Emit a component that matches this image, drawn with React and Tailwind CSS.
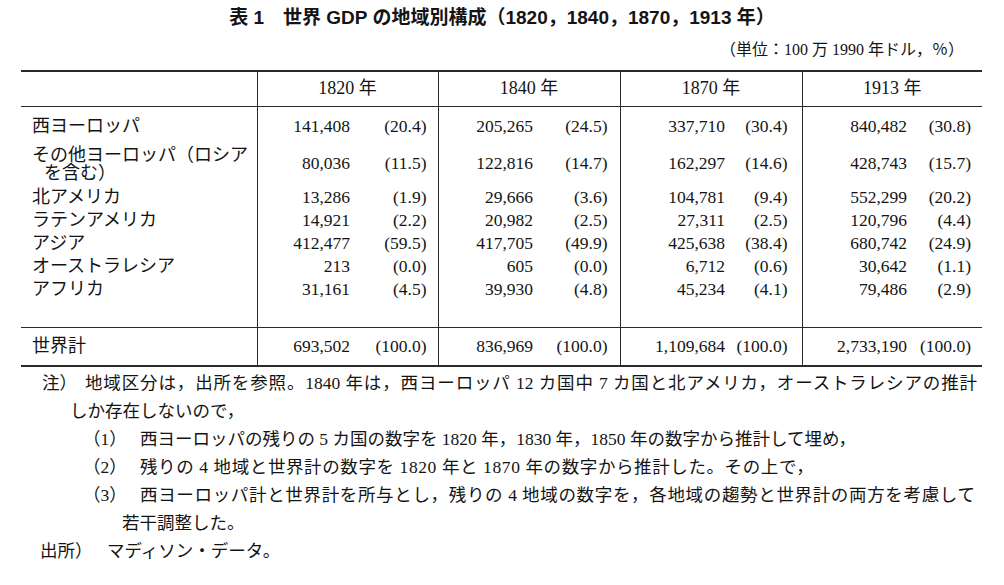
import { Fragment } from "react";

const rows = [
  { name: ["西ヨーロッパ"], v: [["141,408", "(20.4)"], ["205,265", "(24.5)"], ["337,710", "(30.4)"], ["840,482", "(30.8)"]] },
  { name: ["その他ヨーロッパ（ロシア", "を含む）"], v: [["80,036", "(11.5)"], ["122,816", "(14.7)"], ["162,297", "(14.6)"], ["428,743", "(15.7)"]] },
  { name: ["北アメリカ"], v: [["13,286", "(1.9)"], ["29,666", "(3.6)"], ["104,781", "(9.4)"], ["552,299", "(20.2)"]] },
  { name: ["ラテンアメリカ"], v: [["14,921", "(2.2)"], ["20,982", "(2.5)"], ["27,311", "(2.5)"], ["120,796", "(4.4)"]] },
  { name: ["アジア"], v: [["412,477", "(59.5)"], ["417,705", "(49.9)"], ["425,638", "(38.4)"], ["680,742", "(24.9)"]] },
  { name: ["オーストラレシア"], v: [["213", "(0.0)"], ["605", "(0.0)"], ["6,712", "(0.6)"], ["30,642", "(1.1)"]] },
  { name: ["アフリカ"], v: [["31,161", "(4.5)"], ["39,930", "(4.8)"], ["45,234", "(4.1)"], ["79,486", "(2.9)"]] },
];

const total = [["693,502", "(100.0)"], ["836,969", "(100.0)"], ["1,109,684", "(100.0)"], ["2,733,190", "(100.0)"]];

const years = ["1820 年", "1840 年", "1870 年", "1913 年"];

// right padding of the percentage cell, per year column
const pctPad = ["pr-[11px]", "pr-[12px]", "pr-[14px]", "pr-[11px]"];

function Cells({ vals, extra = "" }) {
  return vals.map(([n, p], i) => (
    <Fragment key={i}>
      <td className={`border-l border-[#2a2a2a] text-right align-middle ${extra}`}>{n}</td>
      <td className={`text-right align-middle ${pctPad[i]} ${extra}`}>{p}</td>
    </Fragment>
  ));
}

export default function App() {
  return (
    <div className="w-[1004px] h-[585px] bg-white text-[#141414] overflow-hidden font-['Liberation_Serif','Noto_Sans_CJK_JP',serif]">
      {/* Title */}
      <div className="h-[36px] leading-[36px] text-center text-[19px] font-bold font-['Liberation_Sans','Noto_Sans_CJK_JP',sans-serif]">
        表 1　世界 GDP の地域別構成（1820，1840，1870，1913 年）
      </div>
      <div className="h-[34px] leading-[28px] text-right pr-[40px] text-[16px]">
        （単位：100 万 1990 年ドル，％）
      </div>

      {/* Table */}
      <table className="ml-[21px] w-[961px] table-fixed border-collapse border-t-2 border-b-2 border-[#2a2a2a] text-[17.5px]">
        <colgroup>
          <col className="w-[236px]" />
          <col className="w-[93px]" />
          <col className="w-[88px]" />
          <col className="w-[95px]" />
          <col className="w-[87px]" />
          <col className="w-[105px]" />
          <col className="w-[77px]" />
          <col className="w-[105px]" />
          <col className="w-[75px]" />
        </colgroup>
        <thead>
          <tr className="h-[35px] border-b border-[#2a2a2a] text-[18px]">
            <th></th>
            {years.map((y) => (
              <th key={y} colSpan={2} className="border-l border-[#2a2a2a] font-normal text-center">
                {y}
              </th>
            ))}
          </tr>
        </thead>
        <tbody>
          {rows.map((r, idx) => {
            const first = idx === 0;
            const last = idx === rows.length - 1;
            const two = r.name.length > 1;
            const pad = first ? "pt-[8px]" : last ? "pb-[26px]" : two ? "pt-[8px] pb-[4px]" : "";
            return (
              <tr key={idx} className="leading-[23px]">
                <td className={`pl-[11px] text-[18px] ${pad}`}>
                  {two ? (
                    <div className="leading-[18px]">
                      <div>{r.name[0]}</div>
                      <div className="pl-[12px]">{r.name[1]}</div>
                    </div>
                  ) : (
                    r.name[0]
                  )}
                </td>
                <Cells vals={r.v} extra={pad} />
              </tr>
            );
          })}
          <tr className="h-[39px] border-t border-[#2a2a2a]">
            <td className="pl-[11px] text-[18px]">世界計</td>
            <Cells vals={total} />
          </tr>
        </tbody>
      </table>

      {/* Notes */}
      <div className="mt-[2px] text-[17.5px] leading-[28px]">
        <div className="flex pl-[42px]">
          <span className="w-[43px] shrink-0">注）</span>
          <span className="block w-[892px] text-justify [text-align-last:justify]">
            地域区分は，出所を参照。1840 年は，西ヨーロッパ 12 カ国中 7 カ国と北アメリカ，オーストラレシアの推計
          </span>
        </div>
        <div className="pl-[70px]">しか存在しないので，</div>
        <div className="flex pl-[83px]">
          <span className="w-[57px] shrink-0">（1）</span>
          <span>西ヨーロッパの残りの 5 カ国の数字を 1820 年，1830 年，1850 年の数字から推計して埋め，</span>
        </div>
        <div className="flex pl-[83px]">
          <span className="w-[57px] shrink-0">（2）</span>
          <span className="tracking-[0.6px]">残りの 4 地域と世界計の数字を 1820 年と 1870 年の数字から推計した。その上で，</span>
        </div>
        <div className="flex pl-[83px]">
          <span className="w-[57px] shrink-0">（3）</span>
          <span className="block w-[835px] text-justify [text-align-last:justify]">
            西ヨーロッパ計と世界計を所与とし，残りの 4 地域の数字を，各地域の趨勢と世界計の両方を考慮して
          </span>
        </div>
        <div className="pl-[122px]">若干調整した。</div>
        <div className="flex pl-[40px]">
          <span className="w-[67px] shrink-0">出所）</span>
          <span>マディソン・データ。</span>
        </div>
      </div>
    </div>
  );
}
